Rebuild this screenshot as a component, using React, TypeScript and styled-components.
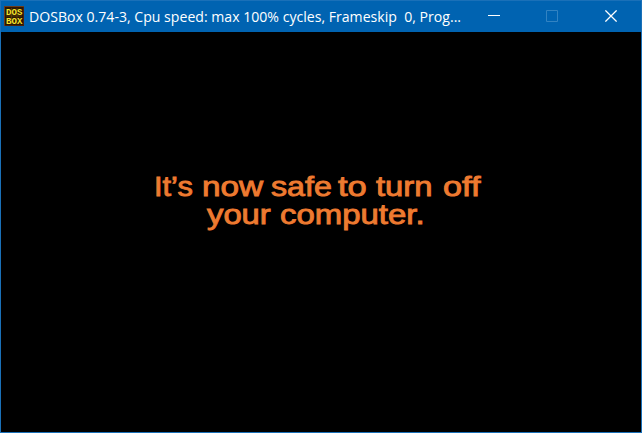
import React from "react";
import styled, { createGlobalStyle } from "styled-components";

const GlobalStyle = createGlobalStyle`
  html, body { margin: 0; padding: 0; background: #000; }
  * { box-sizing: border-box; }
`;

const Window = styled.div`
  width: 642px;
  height: 433px;
  display: flex;
  flex-direction: column;
  overflow: hidden;
  background: #000;
  border: 1px solid #1a70b8;
`;

const TitleBar = styled.header`
  height: 31px;
  flex: none;
  display: flex;
  align-items: center;
  padding: 0 0 1px 3px;
  background: #0063b1;
`;

const Title = styled.div`
  width: 436px;
  margin-left: 5px;
  padding-top: 2px;
  flex: none;
  color: #fff;
  font: 400 14.5px/20px "Open Sans", sans-serif;
  white-space: pre;
`;

const TitleText = styled.span`
  display: inline-block;
  transform: scaleX(0.972);
  transform-origin: 0 50%;
`;

const Controls = styled.div`
  display: flex;
  height: 100%;
`;

const ControlButton = styled.button<{ $disabled?: boolean }>`
  width: 58px;
  height: 100%;
  padding: 0;
  border: 0;
  display: flex;
  align-items: center;
  justify-content: center;
  background: transparent;
  color: ${(p) => (p.$disabled ? "#3283c2" : "#fff")};
`;

const CloseButton = styled(ControlButton)`
  width: 60px;
`;

const Screen = styled.main`
  flex: 1;
  display: flex;
  flex-direction: column;
  padding-top: 140px;
`;

const Line = styled.div<{ $indent: number }>`
  display: flex;
  height: 28px;
  padding-left: ${(p) => p.$indent}px;
`;

const Word = styled.span<{ $advance: number; $stretch: number }>`
  flex: none;
  width: ${(p) => p.$advance}px;
  transform: scaleX(${(p) => p.$stretch});
  transform-origin: 0 50%;
  white-space: pre;
  color: #ee7a30;
  -webkit-text-stroke: 0.9px #ee7a30;
  font: 400 28.5px/28px "Liberation Sans", Arial, sans-serif;
`;

const firstLine = [
  { text: "It’s", advance: 48, stretch: 1.08 },
  { text: "now", advance: 69, stretch: 1.17 },
  { text: "safe", advance: 67, stretch: 1.13 },
  { text: "to", advance: 38, stretch: 1.21 },
  { text: "turn", advance: 67, stretch: 1.15 },
  { text: "off", advance: 40, stretch: 1.2 },
];

const secondLine = [
  { text: "your", advance: 73, stretch: 1.15 },
  { text: "computer.", advance: 143, stretch: 1.155 },
];

const DosBoxIcon = () => (
  <svg width="20" height="20" viewBox="0 0 20 20">
    <rect width="20" height="20" fill="#4b210b" />
    <rect x="1" y="1" width="18" height="18" fill="#2c1703" />
    <path d="M0 .5H20M.5 0V20" stroke="#6c3b1b" />
    <path d="M2 10H18M7.5 2V18M13 2V18" stroke="#5f4308" strokeWidth=".8" />
    <g fill="#f5e52c" fontFamily="Liberation Mono, monospace" fontSize="9" fontWeight="700">
      <text x="2" y="8.9" textLength="16.5">DOS</text>
      <text x="2" y="17.6" textLength="16.5">BOX</text>
    </g>
  </svg>
);

const App = () => (
  <>
    <GlobalStyle />
    <Window>
      <TitleBar>
        <DosBoxIcon />
        <Title>
          <TitleText>DOSBox 0.74-3, Cpu speed: max 100% cycles, Frameskip  0, Prog...</TitleText>
        </Title>
        <Controls>
          <ControlButton aria-label="Minimize">
            <svg width="12" height="12" viewBox="0 0 12 12">
              <path d="M0 5.5H12" stroke="currentColor" />
            </svg>
          </ControlButton>
          <ControlButton aria-label="Maximize" $disabled>
            <svg width="12" height="12" viewBox="0 0 12 12">
              <path d="M.5 .5H11.5V11.5H.5Z" fill="none" stroke="currentColor" />
            </svg>
          </ControlButton>
          <CloseButton aria-label="Close">
            <svg width="12" height="12" viewBox="0 0 12 12">
              <path d="M.4 .4L11.6 11.6M11.6 .4L.4 11.6" stroke="currentColor" strokeWidth="1.25" />
            </svg>
          </CloseButton>
        </Controls>
      </TitleBar>
      <Screen>
        <Line $indent={153}>
          {firstLine.map((w) => (
            <Word key={w.text} $advance={w.advance} $stretch={w.stretch}>{w.text}</Word>
          ))}
        </Line>
        <Line $indent={206}>
          {secondLine.map((w) => (
            <Word key={w.text} $advance={w.advance} $stretch={w.stretch}>{w.text}</Word>
          ))}
        </Line>
      </Screen>
    </Window>
  </>
);

export default App;
